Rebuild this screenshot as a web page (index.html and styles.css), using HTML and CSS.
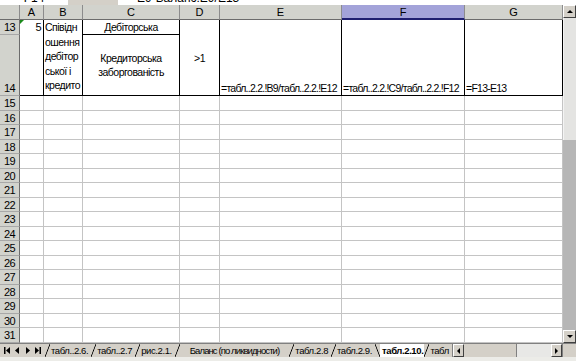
FILE: index.html
```html
<!DOCTYPE html>
<html lang="uk">
<head>
    <meta charset="UTF-8">
    <title>табл.2.10.</title>
    <link rel="stylesheet" href="styles.css">
</head>
<body>
<div class="app">
    <div class="formula-bar">
        <div class="name-box"><span>F14</span></div>
        <div class="fx"><span>▼</span></div>
        <div class="formula"><span>=E9-Баланс!E9/E13</span></div>
    </div>

    <div class="main">
        <div class="sheet">
            <div class="hd"></div>
            <div class="hd">A</div>
            <div class="hd">B</div>
            <div class="hd">C</div>
            <div class="hd">D</div>
            <div class="hd">E</div>
            <div class="hd sel">F</div>
            <div class="hd">G</div>

            <div class="rh">13</div>
            <div class="cell bk span2 num">5</div>
            <div class="cell bk span2 wrap">
                <div>Співідн</div>
                <div>ошення</div>
                <div>дебітор</div>
                <div>ської і</div>
                <div>кредито</div>
            </div>
            <div class="cell bk center">Дебіторська</div>
            <div class="cell bk span2 mid">&gt;1</div>
            <div class="cell bk span2 bottom">=табл..2.2.!B9/табл..2.2.!E12</div>
            <div class="cell bk span2 bottom">=табл..2.2.!C9/табл..2.2.!F12</div>
            <div class="cell bk span2 bottom">=F13-E13</div>
            <div class="rh rh-tall">14</div>
            <div class="cell bk mid">
                <div>Кредиторська</div>
                <div>заборгованість</div>
            </div>

            <div class="rh">15</div><div class="cell"></div><div class="cell"></div><div class="cell"></div><div class="cell"></div><div class="cell"></div><div class="cell"></div><div class="cell"></div>
            <div class="rh">16</div><div class="cell"></div><div class="cell"></div><div class="cell"></div><div class="cell"></div><div class="cell"></div><div class="cell"></div><div class="cell"></div>
            <div class="rh">17</div><div class="cell"></div><div class="cell"></div><div class="cell"></div><div class="cell"></div><div class="cell"></div><div class="cell"></div><div class="cell"></div>
            <div class="rh">18</div><div class="cell"></div><div class="cell"></div><div class="cell"></div><div class="cell"></div><div class="cell"></div><div class="cell"></div><div class="cell"></div>
            <div class="rh">19</div><div class="cell"></div><div class="cell"></div><div class="cell"></div><div class="cell"></div><div class="cell"></div><div class="cell"></div><div class="cell"></div>
            <div class="rh">20</div><div class="cell"></div><div class="cell"></div><div class="cell"></div><div class="cell"></div><div class="cell"></div><div class="cell"></div><div class="cell"></div>
            <div class="rh">21</div><div class="cell"></div><div class="cell"></div><div class="cell"></div><div class="cell"></div><div class="cell"></div><div class="cell"></div><div class="cell"></div>
            <div class="rh">22</div><div class="cell"></div><div class="cell"></div><div class="cell"></div><div class="cell"></div><div class="cell"></div><div class="cell"></div><div class="cell"></div>
            <div class="rh">23</div><div class="cell"></div><div class="cell"></div><div class="cell"></div><div class="cell"></div><div class="cell"></div><div class="cell"></div><div class="cell"></div>
            <div class="rh">24</div><div class="cell"></div><div class="cell"></div><div class="cell"></div><div class="cell"></div><div class="cell"></div><div class="cell"></div><div class="cell"></div>
            <div class="rh">25</div><div class="cell"></div><div class="cell"></div><div class="cell"></div><div class="cell"></div><div class="cell"></div><div class="cell"></div><div class="cell"></div>
            <div class="rh">26</div><div class="cell"></div><div class="cell"></div><div class="cell"></div><div class="cell"></div><div class="cell"></div><div class="cell"></div><div class="cell"></div>
            <div class="rh">27</div><div class="cell"></div><div class="cell"></div><div class="cell"></div><div class="cell"></div><div class="cell"></div><div class="cell"></div><div class="cell"></div>
            <div class="rh">28</div><div class="cell"></div><div class="cell"></div><div class="cell"></div><div class="cell"></div><div class="cell"></div><div class="cell"></div><div class="cell"></div>
            <div class="rh">29</div><div class="cell"></div><div class="cell"></div><div class="cell"></div><div class="cell"></div><div class="cell"></div><div class="cell"></div><div class="cell"></div>
            <div class="rh">30</div><div class="cell"></div><div class="cell"></div><div class="cell"></div><div class="cell"></div><div class="cell"></div><div class="cell"></div><div class="cell"></div>
            <div class="rh">31</div><div class="cell"></div><div class="cell"></div><div class="cell"></div><div class="cell"></div><div class="cell"></div><div class="cell"></div><div class="cell"></div>
        </div>

        <div class="vscroll">
            <div class="sbtn up"></div>
            <div class="vthumb"></div>
            <div class="vtrack"></div>
            <div class="sbtn down"></div>
        </div>
    </div>

    <div class="tabbar">
        <div class="nav">
            <svg width="7" height="7" viewBox="0 0 7 7"><rect x="0" y="0" width="1.5" height="7"/><path d="M6 0 L2 3.5 L6 7 Z"/></svg>
            <svg width="5" height="7" viewBox="0 0 5 7"><path d="M4 0 L0 3.5 L4 7 Z"/></svg>
            <svg width="5" height="7" viewBox="0 0 5 7"><path d="M1 0 L5 3.5 L1 7 Z"/></svg>
            <svg width="7" height="7" viewBox="0 0 7 7"><path d="M1 0 L5 3.5 L1 7 Z"/><rect x="5.5" y="0" width="1.5" height="7"/></svg>
        </div>
        <div class="tabs">
            <i class="sl"></i><span class="tab">табл..2.6.</span>
            <i class="sl"></i><span class="tab">табл..2.7</span>
            <i class="sl"></i><span class="tab">рис.2.1.</span>
            <i class="sl"></i><span class="tab wide">Баланс (по ликвидности)</span>
            <i class="sl"></i><span class="tab">табл.2.8</span>
            <i class="sl"></i><span class="tab">табл.2.9.</span>
            <i class="bs"></i><span class="tab active">табл.2.10.</span>
            <i class="sl"></i><span class="tab">табл</span>
        </div>
        <div class="hscroll">
            <div class="hbtn left"></div>
            <div class="hthumb"></div>
            <div class="htrack"></div>
            <div class="hbtn right"></div>
        </div>
        <div class="size-box"></div>
    </div>
    <div class="statusbar"></div>
</div>
</body>
</html>
```

FILE: styles.css
```css
body {
    margin: 0;
    background: #fff;
    color: #000;
    font-family: "Liberation Sans", Arial, sans-serif;
}
.app {
    width: 576px;
    height: 361px;
    display: flex;
    flex-direction: column;
    overflow: hidden;
}

/* formula bar, cut off at the top */
.formula-bar {
    display: flex;
    flex: none;
    height: 5px;
    overflow: hidden;
    background: #d4d0c8;
    font-size: 12px;
    line-height: 12px;
}
.formula-bar span { display: block; margin-top: -8px; white-space: nowrap; }
.name-box { width: 68px; background: #fff; text-align: center; }
.fx { width: 50px; padding-left: 42px; box-sizing: border-box; font-size: 8px; }
.formula { flex: 1; background: #fff; padding-left: 12px; }

.main { display: flex; flex: none; height: 338px; }

/* grid */
.sheet {
    width: 563px;
    display: grid;
    grid-template-columns: 20px 24px 39px 97px 40px 122px 123px 98px;
    grid-template-rows: 15px 15px 61px repeat(17, 14.5px);
    font-size: 10.5px;
    line-height: 14px;
}
.sheet > div { box-sizing: border-box; }
.hd {
    background: #d2d3cd;
    border-right: 1px solid #8c8c8c;
    border-bottom: 1px solid #6c6c6c;
    text-align: center;
    font-size: 11px;
}
.hd.sel { background: #a3a3d9; border-bottom: 2px solid #1e1e70; }
.rh {
    background: #d2d3cd;
    border-right: 1px solid #6c6c6c;
    border-bottom: 1px solid #a8a8a8;
    text-align: center;
    font-size: 11px;
    letter-spacing: -0.5px;
}
.rh-tall { display: flex; align-items: flex-end; justify-content: center; }
.cell {
    border-right: 1px solid #c4c4c4;
    border-bottom: 1px solid #c4c4c4;
    overflow: hidden;
    white-space: nowrap;
    letter-spacing: -0.5px;
}
.bk { border-right-color: #000; border-bottom-color: #000; }
.span2 { grid-row: span 2; }
.num { text-align: right; padding-right: 2px; position: relative; font-size: 11px; }
.num::before {
    content: "";
    position: absolute;
    left: 0;
    top: 0;
    border-top: 4px solid #1a8a1a;
    border-right: 4px solid transparent;
}
.wrap { padding-left: 1px; }
.wrap div { line-height: 14.5px; }
.center { text-align: center; }
.mid { display: flex; flex-direction: column; align-items: center; justify-content: center; }
.bottom { display: flex; align-items: flex-end; padding-left: 1px; letter-spacing: -0.75px; }

/* scroll bars */
.vscroll {
    width: 13px;
    display: flex;
    flex-direction: column;
    background: #b8b8b8;
}
.sbtn, .hbtn {
    flex: none;
    box-sizing: border-box;
    background: #d4d0c8;
    border: 1px solid;
    border-color: #fff #404040 #404040 #fff;
    display: flex;
    align-items: center;
    justify-content: center;
}
.sbtn { height: 13px; }
.sbtn::after, .hbtn::after { content: ""; width: 0; height: 0; }
.up::after { border-left: 3px solid transparent; border-right: 3px solid transparent; border-bottom: 3px solid #000; }
.down::after { border-left: 3px solid transparent; border-right: 3px solid transparent; border-top: 3px solid #000; }
.left::after { border-top: 3px solid transparent; border-bottom: 3px solid transparent; border-right: 3px solid #000; }
.right::after { border-top: 3px solid transparent; border-bottom: 3px solid transparent; border-left: 3px solid #000; }
.vthumb { height: 122px; background: #e4e4e2; border-left: 1px solid #f4f4f4; }
.vtrack { flex: 1; background: #b6b6b6; }

/* sheet tabs */
.tabbar {
    display: flex;
    flex: none;
    height: 14px;
    box-sizing: border-box;
    border-top: 1px solid #808080;
    background: #d4d0c8;
    font-size: 9.5px;
    line-height: 13px;
    letter-spacing: -0.4px;
}
.nav {
    width: 45px;
    display: flex;
    align-items: center;
    justify-content: space-around;
    padding: 0 2px;
    box-sizing: border-box;
}
.nav svg { fill: #000; }
.tabs { display: flex; width: 408px; overflow: hidden; white-space: nowrap; }
.tab { padding: 0 3px 0 1px; }
.tab.wide { padding: 0 10px 0 10px; letter-spacing: -0.9px; }
.tab.active { background: #fff; font-weight: bold; padding: 0 1px 0 2px; }
.sl, .bs { flex: none; width: 5px; }
.sl { background: linear-gradient(to bottom right, transparent calc(50% - 0.8px), #000 50%, transparent calc(50% + 0.8px)); }
.bs { background: linear-gradient(to top right, transparent calc(50% - 0.8px), #000 50%, transparent calc(50% + 0.8px)); }
.hscroll { display: flex; width: 110px; border-left: 1px solid #808080; box-sizing: border-box; }
.hbtn { width: 11px; }
.hthumb { width: 52px; background: #d4d0c8; border-right: 1px solid #808080; }
.htrack { flex: 1; background: #e8e8e6; }
.size-box { width: 13px; border-left: 1px solid #808080; }
.statusbar { height: 4px; flex: none; background: #ecece8; }
```
